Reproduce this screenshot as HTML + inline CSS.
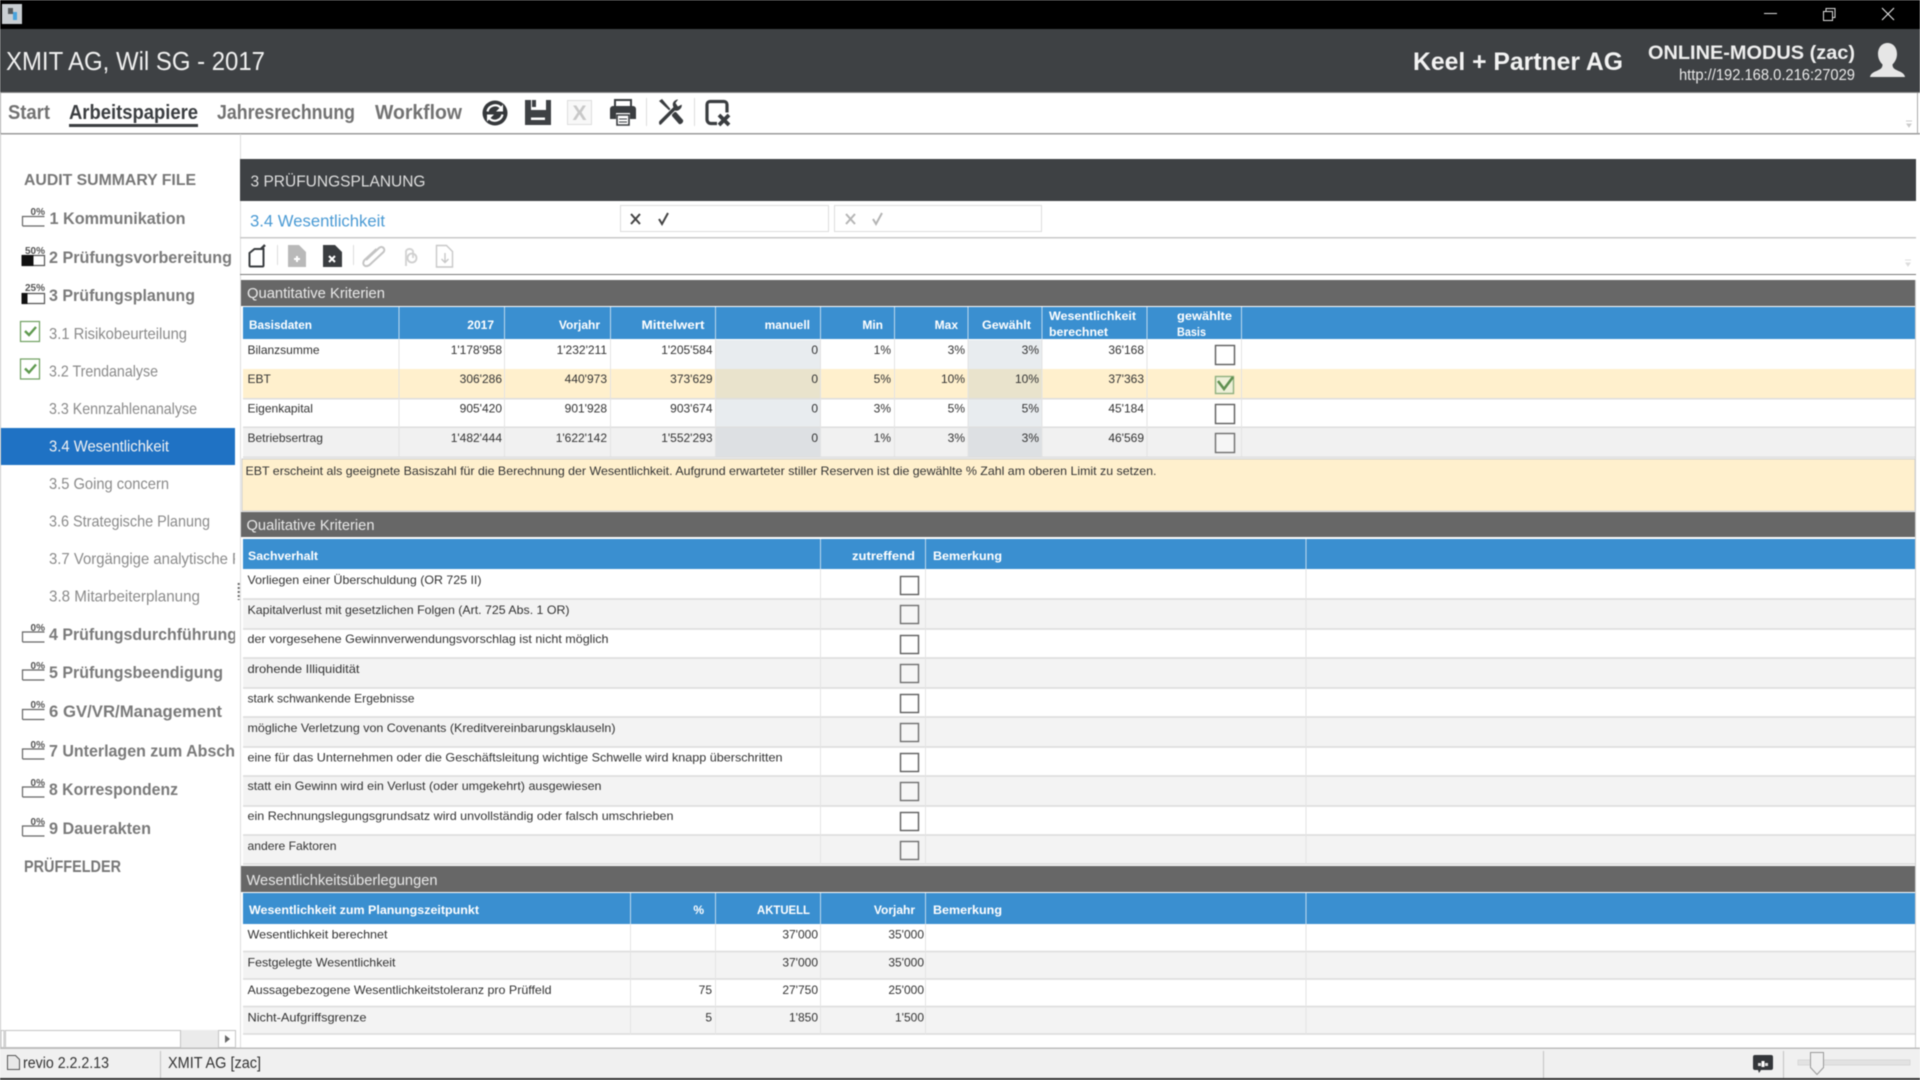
<!DOCTYPE html>
<html lang="de"><head><meta charset="utf-8"><title>revio</title>
<style>
html,body{margin:0;padding:0;background:#fff;width:1920px;height:1080px;overflow:hidden}
svg{display:block;filter:blur(.45px)}
svg svg{filter:none}
text{font-family:"Liberation Sans",sans-serif;white-space:pre}
.s{font-size:12px;fill:#333}
.e{font-size:12px;fill:#333;text-anchor:end}
.h{font-size:12px;font-weight:bold;fill:#fff}
.he{font-size:12px;font-weight:bold;fill:#fff;text-anchor:end}
.b{font-size:15px;fill:#e9e9e9}
.m{font-size:17px;font-weight:bold;fill:#7a7a7a}
.n{font-size:16px;fill:#8a8a8a}
.p{font-size:10px;font-weight:bold;fill:#555}
.t{font-size:20px;font-weight:bold;fill:#727272}
.cb{fill:#fff;stroke:#5e5e5e;stroke-width:1.4}
.cg{fill:#f6f6f6;stroke:#6e6e6e;stroke-width:1.4}
</style></head><body>
<svg width="1920" height="1080" viewBox="0 0 1920 1080" xmlns="http://www.w3.org/2000/svg">
<rect width="1920" height="1080" fill="#fff"/>
<!-- title bar -->
<rect width="1920" height="29" fill="#000"/>
<rect x="2" y="4" width="20" height="20" fill="#c9ced2"/>
<rect x="8" y="8" width="5" height="6" fill="#55595c"/><rect x="13" y="12" width="4" height="8" fill="#4aa3dc"/>
<path d="M1764 13.5h13" stroke="#ddd" stroke-width="1" fill="none"/>
<path d="M1823.5 11.5h9v9h-9zM1826 11.5v-3h9v9h-2.5" stroke="#ddd" stroke-width="1" fill="none"/>
<path d="M1882 8l12 12M1894 8l-12 12" stroke="#eee" stroke-width="1" fill="none"/>
<!-- header -->
<rect y="29" width="1920" height="63" fill="#3e4144"/>
<rect y="92" width="1920" height="1" fill="#8a8a8a"/>
<text x="6" y="70" font-size="26" fill="#f0f0f0" textLength="259" lengthAdjust="spacingAndGlyphs">XMIT AG, Wil SG - 2017</text>
<text x="1413" y="70" font-size="25" font-weight="bold" fill="#f2f2f2" textLength="210" lengthAdjust="spacingAndGlyphs">Keel + Partner AG</text>
<text x="1648" y="59" font-size="19" font-weight="bold" fill="#eee" textLength="207" lengthAdjust="spacingAndGlyphs">ONLINE-MODUS (zac)</text>
<text x="1679" y="80" font-size="15.5" fill="#e8e8e8" textLength="176" lengthAdjust="spacingAndGlyphs">http://192.168.0.216:27029</text>
<path d="M1887.5 43c-6 0-9.5 5-9.5 11 0 5 2.500 8.500 4.500 10.500 0 3-1.500 4.500-5 6-3.500 1.500-7 3-7.500 6.500h35c-.5-3.500-4-5-7.500-6.500-3.500-1.500-5-3-5-6 2-2 4.500-5.500 4.500-10.500 0-6-3.500-11-9.500-11z" fill="#e6e6e6"/>
<!-- toolbar -->
<rect x="1" y="93" width="1916" height="40" fill="#fff"/>
<rect y="133" width="1920" height="1.5" fill="#9a9a9a"/>
<rect x="1917" y="93" width="1" height="41" fill="#aaa"/><rect y="93" width="1" height="41" fill="#aaa"/>
<text x="8" y="119" class="t" textLength="42" lengthAdjust="spacingAndGlyphs">Start</text>
<text x="69" y="119" class="t" style="fill:#3b3e41" textLength="129" lengthAdjust="spacingAndGlyphs">Arbeitspapiere</text>
<rect x="69" y="124" width="129" height="3" fill="#3b3e41"/>
<text x="217" y="119" class="t" textLength="138" lengthAdjust="spacingAndGlyphs">Jahresrechnung</text>
<text x="375" y="119" class="t" textLength="87" lengthAdjust="spacingAndGlyphs">Workflow</text>
<!-- refresh -->
<circle cx="495" cy="113" r="12.5" fill="#35383b"/>
<path d="M487.500 111.500a7.800 7.800 0 0 1 13.500-3.500M502.500 114.500a7.800 7.800 0 0 1-13.500 3.500" stroke="#fff" stroke-width="2.200" fill="none"/>
<path d="M503 104.500v7h-7zM487 121.500v-7h7z" fill="#fff"/>
<!-- save -->
<path d="M525 100h6v10h15v-10h5v25h-26z" fill="#3e4144"/><rect x="532" y="100" width="4" height="7" fill="#3e4144"/>
<rect x="531" y="117.500" width="14" height="2.500" fill="#fff"/>
<!-- excel -->
<rect x="567.500" y="100.500" width="24" height="24" fill="#f8f8f8" stroke="#ddd"/>
<text x="579.500" y="120" font-size="21" font-weight="bold" fill="#c8c8c8" text-anchor="middle">X</text>
<!-- printer -->
<path d="M615 100h16v7h-16z" fill="none" stroke="#3a3d40" stroke-width="2"/>
<path d="M613 106h20a3 3 0 0 1 3 3v10h-6v-6h-14v6h-6v-10a3 3 0 0 1 3-3z" fill="#3a3d40"/>
<path d="M617 115h12v10h-12z" fill="#fff" stroke="#3a3d40" stroke-width="1.600"/><path d="M619 119h8M619 122h8" stroke="#3a3d40"/>
<rect x="646" y="98" width="1" height="28" fill="#ddd"/>
<!-- tools -->
<path d="M659 101l3-2 11 13 3 0 7 8c1 2-2 5-4 4l-7-8v-3z" fill="#3a3d40"/>
<path d="M659 121l14-14c-2-4 1-8 6-8l-3 4 2 3 4-2c1 4-3 8-7 7l-14 14c-2 1-3-2-2-4z" fill="#3a3d40" stroke="#fff" stroke-width=".8"/>
<rect x="694" y="98" width="1" height="28" fill="#ddd"/>
<!-- cx -->
<path d="M717 123.500h-6a4 4 0 0 1-4-4v-15a3 3 0 0 1 3-3h14a3 3 0 0 1 3 3v8" fill="none" stroke="#3a3d40" stroke-width="3.200"/>
<path d="M719 115l10 10M729 115l-10 10" stroke="#3a3d40" stroke-width="3.800"/>
<path d="M1906 121h6M1907 124h4l-2 3z" stroke="#ccc" fill="#ccc"/>
<!-- sidebar -->
<rect x="0" y="134" width="1" height="914" fill="#c8c8c8"/>
<rect x="240" y="134" width="1" height="914" fill="#dcdcdc"/>
<text x="24" y="185" font-size="16" font-weight="bold" fill="#777" textLength="172" lengthAdjust="spacingAndGlyphs">AUDIT SUMMARY FILE</text>
<rect x="1" y="428" width="234" height="37" fill="#1f72c4"/>
<g>
<text x="49.500" y="224" class="m" textLength="136" lengthAdjust="spacingAndGlyphs">1 Kommunikation</text>
<text x="49" y="263" class="m" textLength="183" lengthAdjust="spacingAndGlyphs">2 Prüfungsvorbereitung</text>
<text x="49" y="301" class="m" textLength="146" lengthAdjust="spacingAndGlyphs">3 Prüfungsplanung</text>
<text x="49" y="339" class="n" textLength="138" lengthAdjust="spacingAndGlyphs">3.1 Risikobeurteilung</text>
<text x="49" y="376.5" class="n" textLength="109" lengthAdjust="spacingAndGlyphs">3.2 Trendanalyse</text>
<text x="49" y="414" class="n" textLength="148" lengthAdjust="spacingAndGlyphs">3.3 Kennzahlenanalyse</text>
<text x="49" y="451.5" font-size="16" fill="#f2f2f2" textLength="120" lengthAdjust="spacingAndGlyphs">3.4 Wesentlichkeit</text>
<text x="49" y="489" class="n" textLength="120" lengthAdjust="spacingAndGlyphs">3.5 Going concern</text>
<text x="49" y="526.5" class="n" textLength="161" lengthAdjust="spacingAndGlyphs">3.6 Strategische Planung</text>
<svg x="0" y="540" width="235" height="40"><text x="49" y="24" class="n" textLength="193" lengthAdjust="spacingAndGlyphs">3.7 Vorgängige analytische P</text></svg>
<text x="49" y="601.5" class="n" textLength="151" lengthAdjust="spacingAndGlyphs">3.8 Mitarbeiterplanung</text>
<svg x="0" y="620" width="235" height="30"><text x="49" y="20" class="m" textLength="188" lengthAdjust="spacingAndGlyphs">4 Prüfungsdurchführung</text></svg>
<text x="49" y="678" class="m" textLength="174" lengthAdjust="spacingAndGlyphs">5 Prüfungsbeendigung</text>
<text x="49" y="717" class="m" textLength="173" lengthAdjust="spacingAndGlyphs">6 GV/VR/Management</text>
<text x="49" y="756.5" class="m" textLength="186" lengthAdjust="spacingAndGlyphs">7 Unterlagen zum Absch</text>
<text x="49" y="795" class="m" textLength="129" lengthAdjust="spacingAndGlyphs">8 Korrespondenz</text>
<text x="49" y="834" class="m" textLength="102" lengthAdjust="spacingAndGlyphs">9 Dauerakten</text>
<text x="24" y="872" font-size="17" font-weight="bold" fill="#777" textLength="97" lengthAdjust="spacingAndGlyphs">PRÜFFELDER</text>
</g>
<!-- progress icons -->
<g fill="none" stroke-width="1.200">
<path d="M22.500 226v-9.500h22M22.500 226h22" stroke="#666"/>
<path d="M22.500 265.500v-10h22v10z" stroke="#555"/><rect x="21.500" y="255" width="12" height="11" fill="#111" stroke="none"/>
<path d="M22.500 303.500v-10h22v10z" stroke="#555"/><rect x="21.500" y="293" width="6" height="11" fill="#111" stroke="none"/>
<path d="M22.500 719.500v-10h22M22.500 719.500h22" stroke="#666"/>
<path d="M22.500 642v-10h22M22.500 642h22" stroke="#666"/>
<path d="M22.500 680v-10h22M22.500 680h22" stroke="#666"/>
<path d="M22.500 759v-10h22M22.500 759h22" stroke="#666"/>
<path d="M22.500 797v-10h22M22.500 797h22" stroke="#666"/>
<path d="M22.500 836v-10h22M22.500 836h22" stroke="#666"/>
</g>
<text x="45" y="215" class="p" style="text-anchor:end">0%</text>
<text x="45" y="254" class="p" style="text-anchor:end">50%</text>
<text x="45" y="291" class="p" style="text-anchor:end">25%</text>
<text x="45" y="631" class="p" style="text-anchor:end">0%</text>
<text x="45" y="669" class="p" style="text-anchor:end">0%</text>
<text x="45" y="708" class="p" style="text-anchor:end">0%</text>
<text x="45" y="748" class="p" style="text-anchor:end">0%</text>
<text x="45" y="786" class="p" style="text-anchor:end">0%</text>
<text x="45" y="825" class="p" style="text-anchor:end">0%</text>
<rect x="20.500" y="321.500" width="19" height="20" fill="#fff" stroke="#6f9f5f" stroke-width="1.200"/>
<path d="M25 331l4 4 7-8" fill="none" stroke="#5f9a4f" stroke-width="2.400"/>
<rect x="20.500" y="359" width="19" height="20" fill="#fff" stroke="#6f9f5f" stroke-width="1.200"/>
<path d="M25 368.500l4 4 7-8" fill="none" stroke="#5f9a4f" stroke-width="2.400"/>
<path d="M238.700 583v17" stroke="#666" stroke-width="2" stroke-dasharray="2 2"/>
<!-- h scrollbar -->
<rect x="1" y="1030" width="234" height="18" fill="#ebebeb"/>
<rect x="1" y="1030.500" width="3" height="17" fill="#fff" stroke="#c4c4c4"/>
<rect x="5.500" y="1030.500" width="175" height="17" fill="#fff" stroke="#c4c4c4"/>
<rect x="218.500" y="1030.500" width="17" height="17" fill="#fff" stroke="#c4c4c4"/>
<path d="M225 1035l5 4-5 4z" fill="#666"/>
<!-- section header -->
<rect x="240" y="159" width="1676" height="42" fill="#3e4144"/>
<text x="250.500" y="186.500" font-size="16" fill="#dedede" textLength="175" lengthAdjust="spacingAndGlyphs">3 PRÜFUNGSPLANUNG</text>
<text x="250" y="226.500" font-size="17" fill="#4a9ad4" textLength="135" lengthAdjust="spacingAndGlyphs">3.4 Wesentlichkeit</text>
<rect x="240" y="237" width="1676" height="1.500" fill="#c8c8c8"/>
<rect x="620.500" y="205.500" width="208" height="26" fill="#fff" stroke="#ddd"/>
<rect x="834.500" y="205.500" width="207" height="26" fill="#fff" stroke="#ddd"/>
<path d="M631 214l9 10M640 214l-9 10" stroke="#444" stroke-width="2"/>
<path d="M659 219l3 5 6-11" fill="none" stroke="#444" stroke-width="2"/>
<path d="M846 214l9 10M855 214l-9 10" stroke="#b5b5b5" stroke-width="2"/>
<path d="M873 219l3 5 6-11" fill="none" stroke="#b5b5b5" stroke-width="2"/>
<!-- second toolbar -->
<path d="M249.500 253l5-4h9v16.500a1 1 0 0 1-1 1h-12a1 1 0 0 1-1-1z" fill="none" stroke="#3a3d40" stroke-width="2"/>
<path d="M261 249l4-4" stroke="#3a3d40" stroke-width="2.400"/>
<rect x="277" y="245" width="1" height="20" fill="#ddd"/>
<path d="M288 245h11l7 7v15h-18z" fill="#b9b9b9"/><path d="M294 259h6M297 256v6" stroke="#fff" stroke-width="2"/>
<path d="M323 245h12l7 7v15h-19z" fill="#3a3d40"/><path d="M329 256l6 6M335 256l-6 6" stroke="#fff" stroke-width="2"/>
<rect x="353" y="245" width="1" height="20" fill="#ddd"/>
<path d="M366 260l13-12c3-3 7 1 4.500 4l-14 13c-5 3-8-1-5-5l12-11" fill="none" stroke="#c4c4c4" stroke-width="2"/>
<path d="M406 266v-15a4 4 0 0 1 7 0v7" fill="none" stroke="#d2d2d2" stroke-width="1.800"/><circle cx="412" cy="258" r="4.500" fill="none" stroke="#cfcfcf" stroke-width="1.800"/>
<path d="M436.500 245.500h10l6 6v15.500h-16z" fill="#fff" stroke="#c8c8c8" stroke-width="1.400"/><path d="M445 253v9M441.500 259l3.500 3.500 3.500-3.500" fill="none" stroke="#c8c8c8" stroke-width="1.400"/>
<path d="M1905 260h6M1906 263h4l-2 3z" stroke="#ddd" fill="#ddd"/>
<rect x="240" y="274" width="1676" height="1" fill="#777"/>
<!-- section 1 -->
<rect x="241" y="280" width="1674" height="26" fill="#676767"/>
<text x="247" y="298" class="b" textLength="138" lengthAdjust="spacingAndGlyphs">Quantitative Kriterien</text>
<rect x="243" y="307" width="1672" height="32" fill="#3a8fd0"/>
<rect x="243" y="369" width="1672" height="29" fill="#fff0cd"/>
<rect x="243" y="428" width="1672" height="29" fill="#f1f1f1"/>
<rect x="243" y="398" width="1672" height="1.500" fill="#dedede"/><rect x="243" y="426.500" width="1672" height="1.500" fill="#dedede"/><rect x="243" y="456.500" width="1672" height="1.500" fill="#dedede"/>
<rect x="715.500" y="340" width="105" height="29" fill="#e8ecef"/><rect x="715.500" y="369" width="105" height="29" fill="#e9e3cc"/><rect x="715.500" y="399.500" width="105" height="27" fill="#e8ecef"/><rect x="715.500" y="428" width="105" height="28.500" fill="#dde0e3"/>
<rect x="968" y="340" width="74" height="29" fill="#e8ecef"/><rect x="968" y="369" width="74" height="29" fill="#e9e3cc"/><rect x="968" y="399.500" width="74" height="27" fill="#e8ecef"/><rect x="968" y="428" width="74" height="28.500" fill="#dde0e3"/>
<path d="M399 307v32M504.500 307v32M610.500 307v32M715.500 307v32M820.500 307v32M894.500 307v32M968 307v32M1042 307v32M1147 307v32M1241.500 307v32" stroke="#bcd9ee"/>
<path d="M399 339v118M504.500 339v118M610.500 339v118M715.500 339v118M820.500 339v118M894.500 339v118M968 339v118M1042 339v118M1147 339v118M1241.500 339v118" stroke="#e3e3e3"/>
<text x="249" y="329" class="h" textLength="63" lengthAdjust="spacingAndGlyphs">Basisdaten</text>
<text x="494" y="329" class="he">2017</text><text x="600" y="329" class="he">Vorjahr</text><text x="704.500" y="329" class="he" textLength="63" lengthAdjust="spacingAndGlyphs">Mittelwert</text><text x="810" y="329" class="he">manuell</text><text x="883" y="329" class="he">Min</text><text x="958" y="329" class="he">Max</text><text x="1031" y="329" class="he" textLength="49" lengthAdjust="spacingAndGlyphs">Gewählt</text>
<text x="1049" y="320" class="h" textLength="87" lengthAdjust="spacingAndGlyphs">Wesentlichkeit</text><text x="1049" y="336" class="h" textLength="59" lengthAdjust="spacingAndGlyphs">berechnet</text>
<text x="1177" y="320" class="h" textLength="55" lengthAdjust="spacingAndGlyphs">gewählte</text><text x="1177" y="336" class="h" textLength="29" lengthAdjust="spacingAndGlyphs">Basis</text>
<text x="247.500" y="354" class="s">Bilanzsumme</text><text x="502" y="354" class="e">1'178'958</text><text x="607" y="354" class="e">1'232'211</text><text x="712.500" y="354" class="e">1'205'584</text><text x="818" y="354" class="e">0</text><text x="891" y="354" class="e">1%</text><text x="965" y="354" class="e">3%</text><text x="1039" y="354" class="e">3%</text><text x="1144" y="354" class="e">36'168</text>
<text x="247.500" y="383" class="s">EBT</text><text x="502" y="383" class="e">306'286</text><text x="607" y="383" class="e">440'973</text><text x="712.500" y="383" class="e">373'629</text><text x="818" y="383" class="e">0</text><text x="891" y="383" class="e">5%</text><text x="965" y="383" class="e">10%</text><text x="1039" y="383" class="e">10%</text><text x="1144" y="383" class="e">37'363</text>
<text x="247.500" y="412.500" class="s">Eigenkapital</text><text x="502" y="412.500" class="e">905'420</text><text x="607" y="412.500" class="e">901'928</text><text x="712.500" y="412.500" class="e">903'674</text><text x="818" y="412.500" class="e">0</text><text x="891" y="412.500" class="e">3%</text><text x="965" y="412.500" class="e">5%</text><text x="1039" y="412.500" class="e">5%</text><text x="1144" y="412.500" class="e">45'184</text>
<text x="247.500" y="442" class="s">Betriebsertrag</text><text x="502" y="442" class="e">1'482'444</text><text x="607" y="442" class="e">1'622'142</text><text x="712.500" y="442" class="e">1'552'293</text><text x="818" y="442" class="e">0</text><text x="891" y="442" class="e">1%</text><text x="965" y="442" class="e">3%</text><text x="1039" y="442" class="e">3%</text><text x="1144" y="442" class="e">46'569</text>
<rect x="1215.500" y="345.500" width="19" height="19" class="cb"/>
<rect x="1215.500" y="376.500" width="18" height="17" fill="#eef0d8" stroke="#8fb07f" stroke-width="1.400"/><path d="M1218 381l6 8 9-12" fill="none" stroke="#5f9050" stroke-width="2.600"/>
<rect x="1215.500" y="404.500" width="19" height="19" class="cb"/>
<rect x="1215.500" y="433.500" width="19" height="19" class="cg"/>
<rect x="242" y="459" width="1673" height="52" fill="#fff0cd" stroke="#cfcfcf"/>
<text x="245.500" y="475" class="s" textLength="911" lengthAdjust="spacingAndGlyphs">EBT erscheint als geeignete Basiszahl für die Berechnung der Wesentlichkeit. Aufgrund erwarteter stiller Reserven ist die gewählte % Zahl am oberen Limit zu setzen.</text>
<!-- section 2 -->
<rect x="241" y="512" width="1674" height="25" fill="#676767"/>
<text x="246.500" y="530" class="b" textLength="128" lengthAdjust="spacingAndGlyphs">Qualitative Kriterien</text>
<rect x="243" y="539" width="1672" height="30" fill="#3a8fd0"/>
<rect x="243" y="599" width="1672" height="30" fill="#f3f3f3"/><rect x="243" y="658" width="1672" height="30" fill="#f3f3f3"/><rect x="243" y="717" width="1672" height="30" fill="#f3f3f3"/><rect x="243" y="776" width="1672" height="30" fill="#f3f3f3"/><rect x="243" y="835" width="1672" height="30" fill="#f3f3f3"/>
<path d="M243 599h1672M243 629h1672M243 658h1672M243 688h1672M243 717h1672M243 747h1672M243 776h1672M243 806h1672M243 835h1672M243 864h1672" stroke="#dcdcdc" stroke-width="1.500"/>
<path d="M820.500 539v30M925.500 539v30M1306 539v30" stroke="#bcd9ee"/>
<path d="M820.500 569v296M925.500 569v296M1306 569v296" stroke="#e3e3e3"/>
<text x="248" y="560" class="h" textLength="70" lengthAdjust="spacingAndGlyphs">Sachverhalt</text>
<text x="915" y="560" class="he" textLength="63" lengthAdjust="spacingAndGlyphs">zutreffend</text>
<text x="933" y="560" class="h" textLength="69" lengthAdjust="spacingAndGlyphs">Bemerkung</text>
<text x="247.500" y="584" class="s" textLength="234" lengthAdjust="spacingAndGlyphs">Vorliegen einer Überschuldung (OR 725 II)</text>
<text x="247.500" y="614" class="s" textLength="322" lengthAdjust="spacingAndGlyphs">Kapitalverlust mit gesetzlichen Folgen (Art. 725 Abs. 1 OR)</text>
<text x="247.500" y="643" class="s" textLength="361" lengthAdjust="spacingAndGlyphs">der vorgesehene Gewinnverwendungsvorschlag ist nicht möglich</text>
<text x="247.500" y="673" class="s" textLength="112" lengthAdjust="spacingAndGlyphs">drohende Illiquidität</text>
<text x="247.500" y="702.5" class="s" textLength="167" lengthAdjust="spacingAndGlyphs">stark schwankende Ergebnisse</text>
<text x="247.500" y="732" class="s" textLength="368" lengthAdjust="spacingAndGlyphs">mögliche Verletzung von Covenants (Kreditvereinbarungsklauseln)</text>
<text x="247.500" y="761.5" class="s" textLength="535" lengthAdjust="spacingAndGlyphs">eine für das Unternehmen oder die Geschäftsleitung wichtige Schwelle wird knapp überschritten</text>
<text x="247.500" y="790" class="s" textLength="354" lengthAdjust="spacingAndGlyphs">statt ein Gewinn wird ein Verlust (oder umgekehrt) ausgewiesen</text>
<text x="247.500" y="820" class="s" textLength="426" lengthAdjust="spacingAndGlyphs">ein Rechnungslegungsgrundsatz wird unvollständig oder falsch umschrieben</text>
<text x="247.500" y="850" class="s" textLength="89" lengthAdjust="spacingAndGlyphs">andere Faktoren</text>
<rect x="900.500" y="576.500" width="18" height="18" class="cb"/><rect x="900.500" y="605.500" width="18" height="18" class="cg"/><rect x="900.500" y="635.500" width="18" height="18" class="cb"/><rect x="900.500" y="664.500" width="18" height="18" class="cg"/><rect x="900.500" y="694.500" width="18" height="18" class="cb"/><rect x="900.500" y="723.500" width="18" height="18" class="cg"/><rect x="900.500" y="753.500" width="18" height="18" class="cb"/><rect x="900.500" y="782.500" width="18" height="18" class="cg"/><rect x="900.500" y="812.500" width="18" height="18" class="cb"/><rect x="900.500" y="841.500" width="18" height="18" class="cg"/>
<!-- section 3 -->
<rect x="241" y="866" width="1674" height="26" fill="#676767"/>
<text x="246.500" y="885" class="b" textLength="191" lengthAdjust="spacingAndGlyphs">Wesentlichkeitsüberlegungen</text>
<rect x="243" y="893" width="1672" height="31" fill="#3a8fd0"/>
<rect x="243" y="952" width="1672" height="27" fill="#f3f3f3"/><rect x="243" y="1007" width="1672" height="27" fill="#f3f3f3"/>
<path d="M243 951.500h1672M243 979h1672M243 1006.500h1672M243 1034h1672" stroke="#dcdcdc" stroke-width="1.500"/>
<path d="M630.500 893v31M715.500 893v31M820.500 893v31M925.500 893v31M1306 893v31" stroke="#bcd9ee"/>
<path d="M630.500 924v110M715.500 924v110M820.500 924v110M925.500 924v110M1306 924v110" stroke="#e3e3e3"/>
<text x="249" y="914" class="h" textLength="230" lengthAdjust="spacingAndGlyphs">Wesentlichkeit zum Planungszeitpunkt</text>
<text x="704" y="914" class="he">%</text><text x="810" y="914" class="he" textLength="53" lengthAdjust="spacingAndGlyphs">AKTUELL</text><text x="915" y="914" class="he">Vorjahr</text><text x="933" y="914" class="h" textLength="69" lengthAdjust="spacingAndGlyphs">Bemerkung</text>
<text x="247.500" y="938.5" class="s" textLength="140" lengthAdjust="spacingAndGlyphs">Wesentlichkeit berechnet</text><text x="818" y="938.5" class="e">37'000</text><text x="924" y="938.5" class="e">35'000</text>
<text x="247.500" y="966.5" class="s" textLength="148" lengthAdjust="spacingAndGlyphs">Festgelegte Wesentlichkeit</text><text x="818" y="966.5" class="e">37'000</text><text x="924" y="966.5" class="e">35'000</text>
<text x="247.500" y="994" class="s" textLength="304" lengthAdjust="spacingAndGlyphs">Aussagebezogene Wesentlichkeitstoleranz pro Prüffeld</text><text x="712" y="994" class="e">75</text><text x="818" y="994" class="e">27'750</text><text x="924" y="994" class="e">25'000</text>
<text x="247.500" y="1021.5" class="s" textLength="119" lengthAdjust="spacingAndGlyphs">Nicht-Aufgriffsgrenze</text><text x="712" y="1021.5" class="e">5</text><text x="818" y="1021.5" class="e">1'850</text><text x="924" y="1021.5" class="e">1'500</text>
<rect x="1915" y="280" width="1" height="768" fill="#cfcfcf"/>
<!-- status bar -->
<rect y="1048" width="1920" height="30" fill="#f0f0f0"/>
<rect y="1047.500" width="1920" height="1.500" fill="#bdbdbd"/>
<rect y="1078" width="1920" height="2" fill="#333"/>
<rect x="160" y="1051" width="1" height="27" fill="#c4c4c4"/><rect x="1543" y="1051" width="1" height="27" fill="#c4c4c4"/><rect x="1783" y="1051" width="1" height="27" fill="#c4c4c4"/>
<path d="M7.500 1055.500h8l4 4v10h-12z" fill="#e8e8e8" stroke="#555"/>
<text x="23" y="1068" font-size="15.5" fill="#333" textLength="86" lengthAdjust="spacingAndGlyphs">revio 2.2.2.13</text>
<text x="168" y="1068" font-size="15.5" fill="#333" textLength="93" lengthAdjust="spacingAndGlyphs">XMIT AG [zac]</text>
<path d="M1755 1055h16a2 2 0 0 1 2 2v11a2 2 0 0 1-2 2h-10l-2 3-1-3h-3a2 2 0 0 1-2-2v-11a2 2 0 0 1 2-2z" fill="#33363a"/>
<path d="M1758 1066v-3h3v3zM1765 1066v-3h3v3z" fill="#ddd"/><path d="M1761.500 1067v-6h3v6z" fill="#fff"/>
<rect x="1798" y="1060" width="112" height="5" fill="#e2e2e2" stroke="#d8d8d8"/>
<path d="M1810.500 1052.500h13v15l-6.500 7-6.500-7z" fill="#f0f0f0" stroke="#999"/>
</svg>
</body></html>
